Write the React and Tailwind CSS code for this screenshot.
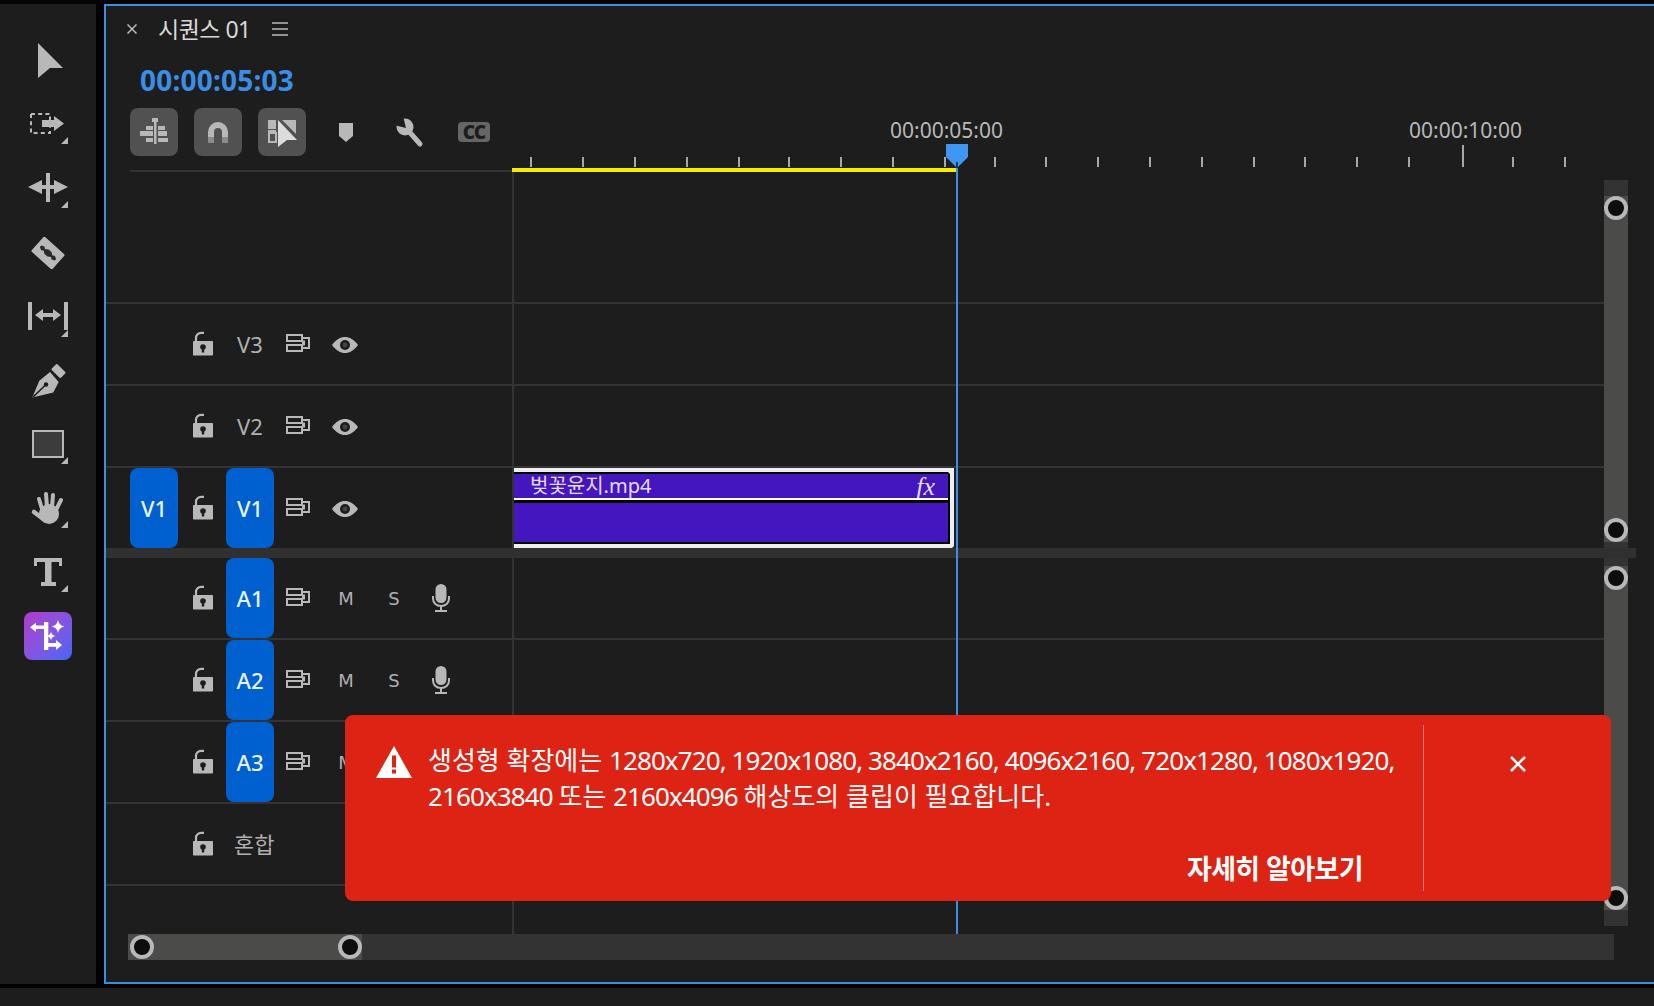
import React from "react";

const G = "#b8b8b8";
const BG = "#1d1d1d";
const FONT = { fontFamily: '"Noto Sans","Noto Sans CJK KR",sans-serif' };

const Corner = ({ y = 44 }) => <polygon points={`56,${y} 56,${y + 7} 49,${y + 7}`} fill={G} />;

const Svg72 = ({ children }) => (
  <svg width="72" height="64" viewBox="0 0 72 64" className="block">
    {children}
  </svg>
);

const tools = [
  <polygon key="a" points="26,14 51,39 38,39 26,49" fill={G} />,
  <g key="b" fill={G}>
    <rect x="19" y="21" width="19" height="19" fill="none" stroke={G} strokeWidth="2" strokeDasharray="4 3.2" />
    <polygon points="30,27 42,27 42,23 52,30.5 42,38 42,34 30,34" />
    <Corner />
  </g>,
  <g key="c" fill={G}>
    <rect x="34" y="16" width="4" height="29" />
    <rect x="28" y="28" width="16" height="4" />
    <polygon points="16,30 30,23 30,37" />
    <polygon points="56,30 42,23 42,37" />
    <Corner />
  </g>,
  <g key="d" transform="rotate(42 36 32)">
    <rect x="22" y="22" width="28" height="20" rx="1.5" fill={G} />
    <polygon points="26,31 29,29.5 31,31 34,29 38,29 41,31 43,29.5 46,31 46,33 43,34.5 41,33 38,35 34,35 31,33 29,34.5 26,33" fill="#2a2a2a" />
  </g>,
  <g key="e" fill={G}>
    <rect x="16" y="17" width="4" height="28" />
    <rect x="52" y="17" width="4" height="28" />
    <polygon points="23,30 31,24 31,28 41,28 41,24 49,30 41,36 41,32 31,32 31,36" />
    <Corner y={45} />
  </g>,
  <g key="f" fill={G} transform="translate(0 2.5)">
    <rect x="40" y="15.5" width="13" height="8" rx="1" transform="rotate(45 46.5 19.5)" />
    <polygon points="38,20.5 46.7,30.5 41.3,41 20.3,46 27.3,29.3" />
    <line x1="21" y1="45.5" x2="33" y2="34" stroke={BG} strokeWidth="1.6" />
    <circle cx="34" cy="33" r="2.2" fill={BG} />
  </g>,
  <g key="g">
    <rect x="21" y="18" width="30" height="26" fill="#3c3c3c" stroke={G} strokeWidth="2" />
    <Corner />
  </g>,
  <g key="h" fill={G} stroke={G} strokeLinecap="round">
    <ellipse cx="37" cy="37" rx="10" ry="10" stroke="none" />
    <line x1="30" y1="32" x2="27" y2="22" strokeWidth="4" />
    <line x1="35" y1="30" x2="34" y2="17" strokeWidth="4" />
    <line x1="40" y1="30" x2="41" y2="18" strokeWidth="4" />
    <line x1="44" y1="33" x2="49" y2="23" strokeWidth="4" />
    <line x1="30" y1="41" x2="22" y2="35" strokeWidth="4.5" />
    <g stroke="none"><Corner /></g>
  </g>,
  <g key="i" fill={G}>
    <path d="M22 17H50V25H47V21H39.5V41H44V45H29V41H33V21H25V25H22Z" />
    <Corner />
  </g>,
];

const Sparkle = ({ x, y, r }) => (
  <path
    d={`M${x} ${y - r}Q${x + r * 0.15} ${y - r * 0.15} ${x + r} ${y}Q${x + r * 0.15} ${y + r * 0.15} ${x} ${y + r}Q${x - r * 0.15} ${y + r * 0.15} ${x - r} ${y}Q${x - r * 0.15} ${y - r * 0.15} ${x} ${y - r}Z`}
    fill="#fff"
  />
);

const Toolbar = () => (
  <div className="flex h-[980px] w-[96px] shrink-0 flex-col items-center bg-[#1d1d1d] pt-[25px]">
    {tools.map((t, i) => (
      <div key={i} className="h-[64px] w-[72px]">
        <Svg72>{t}</Svg72>
      </div>
    ))}
    <div className="mt-[7px] h-[48px] w-[48px] rounded-lg bg-gradient-to-br from-[#b036cc] to-[#3f66f5]">
      <svg width="48" height="48" viewBox="0 0 48 48" className="block">
        <g fill="#fff">
          <polygon points="6,15.3 12,10.7 12,20" />
          <rect x="12" y="13.5" width="9" height="3.5" />
          <rect x="20" y="10" width="4.3" height="28" />
          <rect x="24" y="31" width="8" height="3.8" />
          <polygon points="38,33 32,28 32,38" />
          <Sparkle x={34} y={14.5} r={6.5} />
          <Sparkle x={27} y={24} r={4.5} />
        </g>
      </svg>
    </div>
  </div>
);

const Lock = () => (
  <svg width="20" height="25" viewBox="0 0 20 25" className="block shrink-0">
    <rect x="0" y="10" width="20" height="14.5" rx="0.8" fill={G} />
    <path d="M3 11V7a5.2 5.2 0 0 1 5.2-5.2H11" fill="none" stroke={G} strokeWidth="2.2" />
    <circle cx="10" cy="16" r="2.8" fill={BG} />
    <rect x="8.8" y="16.5" width="2.4" height="5" fill={BG} />
  </svg>
);

const Sync = () => (
  <svg width="24" height="18" viewBox="0 0 24 18" className="block shrink-0">
    <g fill="none" stroke={G} strokeWidth="2">
      <rect x="1" y="1" width="15" height="6" />
      <rect x="1" y="11" width="15" height="6" />
      <path d="M16 4H23V14H16" />
    </g>
    <rect x="16" y="6.5" width="3" height="5" fill={G} />
  </svg>
);

const Eye = () => (
  <svg width="26" height="16" viewBox="0 0 26 16" className="block shrink-0">
    <path d="M0 8C4 2.5 8.5 0 13 0s9 2.5 13 8c-4 5.5-8.5 8-13 8S4 13.5 0 8Z" fill={G} />
    <circle cx="13" cy="8" r="5" fill={BG} />
    <circle cx="13" cy="8" r="2.4" fill={G} fillOpacity="0.25" />
  </svg>
);

const Mic = () => (
  <svg width="18" height="28" viewBox="0 0 18 28" className="block">
    <rect x="3.5" y="0" width="11" height="19" rx="5.5" fill={G} />
    <path d="M1 12V14.5C1 19 4.5 22 9 22s8-3 8-7.5V12" fill="none" stroke={G} strokeWidth="2" />
    <path d="M9 22V26M3 27H15" stroke={G} strokeWidth="2" fill="none" />
  </svg>
);

const Target = ({ label, on = true }) =>
  on ? (
    <div className="flex h-[80px] w-[48px] shrink-0 items-center justify-center rounded-lg bg-[#0060cf] text-[22px] font-medium text-[#e8f3ff]">
      {label}
    </div>
  ) : (
    <div className="flex h-[80px] w-[48px] shrink-0 items-center justify-center text-[22px] text-[#b0b0b0]">{label}</div>
  );

const MARK = { fontFamily: '"DejaVu Sans",sans-serif' };

const Row = ({ src, kind, label, top = true, clip, h = "h-[82px]" }) => (
  <div className={`flex ${h} w-[1498px] ${top ? "border-t-2 border-[#333333]" : ""}`}>
    <div className="flex w-[406px] shrink-0 items-center">
      <div className="ml-[24px] w-[48px] shrink-0">{src && <Target label={src} />}</div>
      <div className="ml-[15px] mb-[2px]">
        <Lock />
      </div>
      {kind === "mix" ? (
        <div className="ml-[21px] w-[60px] text-[22px] text-[#b0b0b0]">{label}</div>
      ) : (
        <>
          <div className="ml-[13px]">
            <Target label={label} on={kind !== "video-off"} />
          </div>
          <div className="ml-[12px] mb-[2px]">
            <Sync />
          </div>
          {kind === "audio" ? (
            <>
              <div className="ml-[24px] w-[24px] text-center text-[18px] text-[#b0b0b0]" style={MARK}>M</div>
              <div className="ml-[24px] w-[24px] text-center text-[18px] text-[#b0b0b0]" style={MARK}>S</div>
              <div className="ml-[26px]">
                <Mic />
              </div>
            </>
          ) : (
            <div className="ml-[22px] mt-[1px]">
              <Eye />
            </div>
          )}
        </>
      )}
    </div>
    <div className="flex-1 border-l-2 border-[#333333]">{clip}</div>
  </div>
);

const Clip = () => (
  <div className="relative h-[80px] w-[440px] rounded-br-sm border-y-4 border-r-4 border-[#eeeeee] bg-black">
    <div className="flex h-[72px] flex-col border-r-2 border-black">
      <div className="mt-[2px] flex h-[24px] items-center justify-between bg-[#4317bd] pl-[16px] pr-[13px] text-[20px] text-[#e6dcf5]">
        <span>벚꽃윤지.mp4</span>
        <span className="text-[26px] italic" style={{ fontFamily: '"Liberation Serif",serif' }}>fx</span>
      </div>
      <div className="h-[2px] bg-white" />
      <div className="mt-[3px] h-[39px] bg-[#4317bd]" />
    </div>
    <svg width="10" height="10" viewBox="0 0 10 10" className="absolute -right-[4px] -top-[4px] block">
      <path d="M0 0H7L10 3V10Z" fill="#eee" />
    </svg>
  </div>
);

const Handle = () => <div className="h-[24px] w-[24px] shrink-0 rounded-full border-4 border-[#b8b8b8] bg-[#0d0d0d]" />;

const Tool = ({ children }) => (
  <div className="flex h-[48px] w-[48px] shrink-0 items-center justify-center rounded-lg bg-[#515151]">
    <svg width="48" height="48" viewBox="0 0 48 48" className="block">
      {children}
    </svg>
  </div>
);

const TICKS = [531, 583, 635, 687, 739, 789, 841, 893, 945, 995, 1046, 1098, 1150, 1202, 1254, 1305, 1357, 1409, 1513, 1565];

const Ruler = () => (
  <div className="relative h-[64px] flex-1 text-[21px] text-[#b8b8b8]">
    <span className="absolute left-[378px] top-[6px] leading-[32px]">00:00:05:00</span>
    <span className="absolute left-[897px] top-[6px] leading-[32px]">00:00:10:00</span>
    <svg width="1142" height="60" viewBox="0 0 1142 60" className="absolute left-0 top-0 block">
      {TICKS.map((x) => (
        <rect key={x} x={x - 512 - 1} y="49" width="2" height="10" fill="#a8a8a8" />
      ))}
      <rect x={1463 - 512 - 1} y="37" width="2" height="22" fill="#a8a8a8" />
    </svg>
    <div className="absolute bottom-0 left-0 h-[4px] w-[444px] bg-[#f5ec00]" />
  </div>
);

const Toast = () => (
  <div className="absolute left-[239px] top-[709px] flex h-[186px] w-[1266px] rounded-lg bg-[#dd2314] text-white">
    <div className="flex w-[1078px] flex-col justify-between pb-[14px]">
      <div className="flex pl-[31px]">
        <svg width="36" height="32" viewBox="0 0 36 32" className="mt-[31px] block shrink-0">
          <polygon points="18,0 36,32 0,32" fill="#fff" />
          <rect x="16" y="9.5" width="4" height="12" fill="#dd2314" />
          <rect x="16" y="23.5" width="4" height="4" fill="#dd2314" />
        </svg>
        <p className="ml-[16px] mt-[27px] whitespace-nowrap text-[26px] leading-[36px] tracking-[-0.9px]">
          <span className="tracking-[0px]">생성형 확장에는 </span>
          1280x720, 1920x1080, 3840x2160, 4096x2160, 720x1280, 1080x1920,
          <br />
          2160x3840 <span className="tracking-[0px]">또는 </span>2160x4096 <span className="tracking-[0px]">해상도의 클립이 필요합니다.</span>
        </p>
      </div>
      <div className="pr-[60px] text-right text-[27px] font-bold leading-[36px] tracking-[-0.6px]">자세히 알아보기</div>
    </div>
    <div className="my-[10px] w-px bg-white/40" />
    <div className="flex flex-1 justify-center pt-[41px]">
      <svg width="16" height="16" viewBox="0 0 16 16" className="block">
        <path d="M1 1L15 15M15 1L1 15" stroke="#fff" strokeWidth="2.5" />
      </svg>
    </div>
  </div>
);

export default function App() {
  return (
    <div className="flex h-[1006px] w-[1654px] flex-col overflow-hidden bg-[#1d1d1d]" style={FONT}>
      <div className="h-[4px] bg-[#050505]" />
      <div className="flex h-[980px] shrink-0">
        <Toolbar />
        <div className="w-[8px] shrink-0 bg-black" />
        <div className="relative flex w-[1550px] shrink-0 flex-col border-y-2 border-l-2 border-[#3a8ee6] bg-[#1d1d1d]">
          {/* header */}
          <div className="flex h-[46px] items-center pl-[21px]">
            <svg width="10" height="10" viewBox="0 0 10 10" className="block">
              <path d="M0.5 0.5L9.5 9.5M9.5 0.5L0.5 9.5" stroke="#bbb" strokeWidth="1.5" />
            </svg>
            <span className="ml-[21px] text-[23px] tracking-[-0.5px] text-[#d8d8d8]">시퀀스 01</span>
            <svg width="16" height="14" viewBox="0 0 16 14" className="ml-[21px] block">
              <path d="M0 1H16M0 7H16M0 13H16" stroke="#b8b8b8" strokeWidth="1.5" />
            </svg>
          </div>
          {/* timecode */}
          <div className="mt-[8px] h-[40px] pl-[34px] text-[28px] font-bold leading-[40px] tracking-[0.2px] text-[#3a8ee6]">00:00:05:03</div>
          <div className="h-[8px]" />
          {/* toolbar + ruler */}
          <div className="flex h-[64px]">
            <div className="ml-[24px] flex h-[64px] w-[382px] shrink-0 items-start border-b-2 border-[#333333]">
              <Tool>
                <g fill={G}>
                  <rect x="24" y="10" width="2.5" height="26" />
                  <rect x="22" y="10" width="6" height="4" />
                  <rect x="16" y="18" width="7" height="4" />
                  <rect x="10" y="23" width="13" height="5" />
                  <rect x="16" y="30" width="7" height="4" />
                  <rect x="28" y="18" width="7" height="4" />
                  <rect x="28" y="23" width="9" height="5" />
                  <rect x="28" y="30" width="10" height="4" />
                </g>
              </Tool>
              <div className="ml-[16px]">
                <Tool>
                  <path d="M17 29V24a7 7 0 0 1 14 0V29" fill="none" stroke={G} strokeWidth="6" />
                  <rect x="14" y="29" width="6" height="6" fill="#8a8a8a" />
                  <rect x="28" y="29" width="6" height="6" fill="#8a8a8a" />
                </Tool>
              </div>
              <div className="ml-[16px]">
                <Tool>
                  <rect x="10" y="12" width="8" height="9" fill={G} />
                  <rect x="11" y="25" width="7" height="9" fill="none" stroke={G} strokeWidth="2" />
                  <rect x="10" y="22" width="8" height="2" fill={G} />
                  <polygon points="24,12 38,12 38,26" fill={G} />
                  <polygon points="20,12 39,32 29,32 20,39" fill="#dcdcdc" />
                </Tool>
              </div>
              <svg width="14" height="19" viewBox="0 0 14 19" className="ml-[33px] mt-[15px] block">
                <polygon points="0,0 14,0 14,13 7,19 0,13" fill={G} />
              </svg>
              <svg width="28" height="30" viewBox="0 0 28 30" className="ml-[43px] mt-[10px] block">
                <line x1="10" y1="10" x2="24" y2="26" stroke={G} strokeWidth="5" strokeLinecap="round" />
                <circle cx="9" cy="9" r="8.5" fill={G} />
                <polygon points="10,10 7,-2 -2,-2 -2,7" fill={BG} />
              </svg>
              <div className="ml-[34px] mt-[14px] flex h-[20px] w-[32px] items-center justify-center rounded-sm bg-[#666666] text-[19px] font-black leading-none tracking-[-1px] text-[#1d1d1d]">
                CC
              </div>
            </div>
            <Ruler />
          </div>

          {/* video tracks */}
          <div className="flex h-[376px]">
            <div className="w-[1498px] shrink-0">
              <div className="flex h-[130px]">
                <div className="w-[406px] shrink-0" />
                <div className="flex-1 border-l-2 border-[#333333]" />
              </div>
              <Row kind="video-off" label="V3" />
              <Row kind="video-off" label="V2" />
              <Row src="V1" kind="video" label="V1" clip={<Clip />} />
            </div>
            <div className="mt-[8px] flex w-[24px] shrink-0 flex-col bg-[#333333] pt-[16px] pb-[6px]">
              <div className="flex flex-1 flex-col justify-between bg-[#4b4c4a]">
                <Handle />
                <Handle />
              </div>
            </div>
          </div>

          {/* band */}
          <div className="h-[10px] w-[1530px] bg-[#303030]" />

          {/* audio tracks */}
          <div className="flex h-[376px]">
            <div className="w-[1498px] shrink-0">
              <Row kind="audio" label="A1" top={false} h="h-[80px]" />
              <Row kind="audio" label="A2" />
              <Row kind="audio" label="A3" />
              <Row kind="mix" label="혼합" />
              <div className="flex h-[50px] border-t-2 border-[#333333]">
                <div className="w-[406px] shrink-0" />
                <div className="flex-1 border-l-2 border-[#333333]" />
              </div>
            </div>
            <div className="mb-[8px] flex w-[24px] shrink-0 flex-col bg-[#333333] pt-[8px] pb-[16px]">
              <div className="flex flex-1 flex-col justify-between bg-[#4b4c4a]">
                <Handle />
                <Handle />
              </div>
            </div>
          </div>

          {/* horizontal scrollbar */}
          <div className="ml-[22px] flex h-[26px] w-[1486px] items-center bg-[#333333]">
            <div className="flex h-[26px] w-[234px] items-center justify-between bg-[#4b4c4a] pl-[2px]">
              <Handle />
              <Handle />
            </div>
          </div>

          {/* playhead */}
          <div className="absolute left-[850px] top-[162px] h-[766px] w-[2px] bg-[#3a8ee6]" />
          <svg width="22" height="24" viewBox="0 0 22 24" className="absolute left-[840px] top-[138px] block">
            <polygon points="0,0 22,0 22,13 11,24 0,13" fill="#3f97f2" />
            <rect x="10" y="18" width="2" height="6" fill="#0d3a70" />
          </svg>

          <Toast />
        </div>
      </div>
      <div className="h-[4px] bg-black" />
    </div>
  );
}
